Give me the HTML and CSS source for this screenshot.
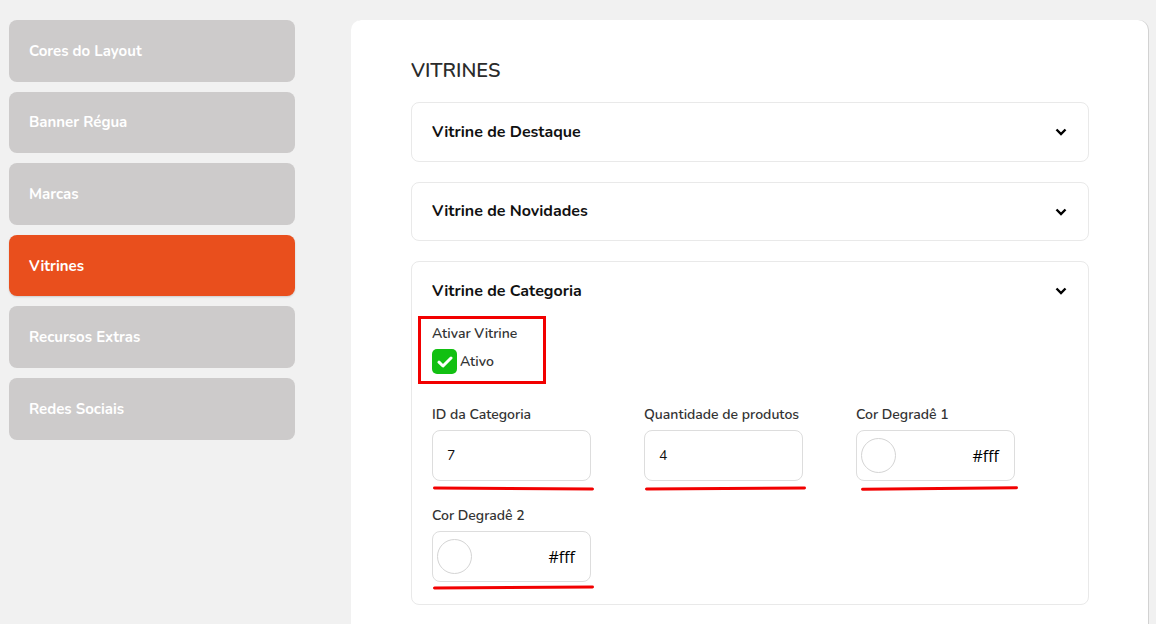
FILE: index.html
```html
<!DOCTYPE html>
<html lang="pt-BR">
<head>
<meta charset="utf-8">
<title>Vitrines</title>
<link rel="stylesheet" href="styles.css">
</head>
<body>
<div class="layout">
  <nav class="sidebar">
    <a class="nav-item">Cores do Layout</a>
    <a class="nav-item">Banner Régua</a>
    <a class="nav-item">Marcas</a>
    <a class="nav-item active">Vitrines</a>
    <a class="nav-item">Recursos Extras</a>
    <a class="nav-item">Redes Sociais</a>
  </nav>
  <main class="panel">
    <h1 class="title">VITRINES</h1>
    <div class="accordion">
      <section class="acc-card">
        <div class="acc-head">
          <span>Vitrine de Destaque</span>
          <svg class="chev" width="12" height="8" viewBox="0 0 12 8"><path d="M1.5 1.5 L6 6 L10.5 1.5" fill="none" stroke="#000" stroke-width="2.4"/></svg>
        </div>
      </section>
      <section class="acc-card">
        <div class="acc-head">
          <span>Vitrine de Novidades</span>
          <svg class="chev" width="12" height="8" viewBox="0 0 12 8"><path d="M1.5 1.5 L6 6 L10.5 1.5" fill="none" stroke="#000" stroke-width="2.4"/></svg>
        </div>
      </section>
      <section class="acc-card open">
        <div class="acc-head">
          <span>Vitrine de Categoria</span>
          <svg class="chev" width="12" height="8" viewBox="0 0 12 8"><path d="M1.5 1.5 L6 6 L10.5 1.5" fill="none" stroke="#000" stroke-width="2.4"/></svg>
        </div>
        <div class="acc-body">
          <div class="highlight">
            <div class="label">Ativar Vitrine</div>
            <label class="check-row">
              <span class="check"><svg width="16" height="12" viewBox="0 0 16 12"><path d="M2 6.2 L6 10 L14 2" fill="none" stroke="#fff" stroke-width="3" stroke-linecap="round" stroke-linejoin="round"/></svg></span>
              <span class="check-text">Ativo</span>
            </label>
          </div>
          <div class="fields">
            <div class="field">
              <div class="label">ID da Categoria</div>
              <div class="input">7</div>
              <div class="mark"></div>
            </div>
            <div class="field">
              <div class="label">Quantidade de produtos</div>
              <div class="input">4</div>
              <div class="mark"></div>
            </div>
            <div class="field">
              <div class="label">Cor Degradê 1</div>
              <div class="input color"><span class="swatch"></span><span class="hex">#fff</span></div>
              <div class="mark"></div>
            </div>
            <div class="field">
              <div class="label">Cor Degradê 2</div>
              <div class="input color"><span class="swatch"></span><span class="hex">#fff</span></div>
              <div class="mark"></div>
            </div>
          </div>
        </div>
      </section>
    </div>
  </main>
</div>
</body>
</html>
```

FILE: styles.css
```css
* { box-sizing: border-box; }
html, body { margin: 0; padding: 0; }
body {
  background: #f1f1f1;
  font-family: "Nunito", "Lato", "Noto Sans", sans-serif;
  color: #222;
  height: 624px;
  overflow: hidden;
}
.layout {
  display: flex;
  align-items: flex-start;
  padding: 20px 0 0 9px;
  gap: 56px;
}
.sidebar {
  width: 286px;
  display: flex;
  flex-direction: column;
  gap: 10px;
}
.nav-item {
  display: flex;
  align-items: center;
  height: 61.6px;
  padding: 0 20px;
  background: #cdcbcb;
  border-radius: 8px;
  color: #fff;
  font-weight: 700;
  font-size: 15px;
}
.nav-item.active {
  background: #e94f1d;
  box-shadow: 0 1px 2px rgba(0,0,0,0.15);
}
.panel {
  width: 797px;
  height: 620px;
  background: #fff;
  border-radius: 10px;
  box-shadow: 1px 0 0 #d2d2d2;
  padding: 40px 59px 0 60px;
}
.title {
  margin: 0 0 20px;
  font-size: 20px;
  font-weight: 600;
  color: #2b2b2b;
  line-height: 22px;
}
.accordion {
  display: flex;
  flex-direction: column;
  gap: 20px;
}
.acc-card {
  border: 1px solid #e9e9e9;
  border-radius: 8px;
}
.acc-head {
  height: 57.5px;
  display: flex;
  align-items: center;
  justify-content: space-between;
  padding: 0 21px 0 20px;
  font-size: 16px;
  font-weight: 700;
  color: #111;
}
.chev { margin-top: 1px; }
.open .acc-head { height: 54px; padding-top: 3px; }
.acc-body {
  padding: 0 20px 15px;
}
.highlight {
  width: 128px;
  margin-left: -14px;
  border: 3px solid #f20000;
  padding: 5px 11px 7px 11px;
}
.label {
  font-size: 14px;
  line-height: 20px;
  font-weight: 600;
  color: #333;
}
.check-row {
  display: flex;
  align-items: center;
  gap: 3px;
  margin-top: 5px;
}
.check {
  width: 25px;
  height: 25px;
  background: #12c012;
  border-radius: 5px;
  display: flex;
  align-items: center;
  justify-content: center;
}
.check-text {
  font-size: 14px;
  font-weight: 600;
  color: #333;
}
.fields {
  display: grid;
  grid-template-columns: repeat(3, 159px);
  column-gap: 53px;
  row-gap: 16px;
  margin-top: 21px;
}
.field .label { margin-bottom: 5px; }
.input {
  height: 51px;
  border: 1px solid #ddd;
  border-radius: 8px;
  display: flex;
  align-items: center;
  padding: 0 14px;
  font-size: 14px;
  color: #111;
}
.input.color {
  justify-content: space-between;
  padding: 0 15px 0 4px;
}
.swatch {
  width: 35px;
  height: 35px;
  border-radius: 50%;
  border: 1px solid #d4d4d4;
}
.hex {
  font-family: "Open Sans", "Noto Sans", sans-serif;
  font-size: 16px;
  font-weight: 500;
  color: #000;
}
.mark {
  height: 3px;
  margin: 6px -3px 0 1px;
  background: #f20000;
  border-radius: 2px;
  transform: rotate(0.3deg);
}
.field:nth-child(2) .mark { transform: rotate(-0.4deg); }
.field:nth-child(3) .mark { transform: rotate(-0.5deg); margin-left: 5px; }
.field:nth-child(4) .mark { margin-top: 4px; transform: rotate(-0.4deg); }
```
